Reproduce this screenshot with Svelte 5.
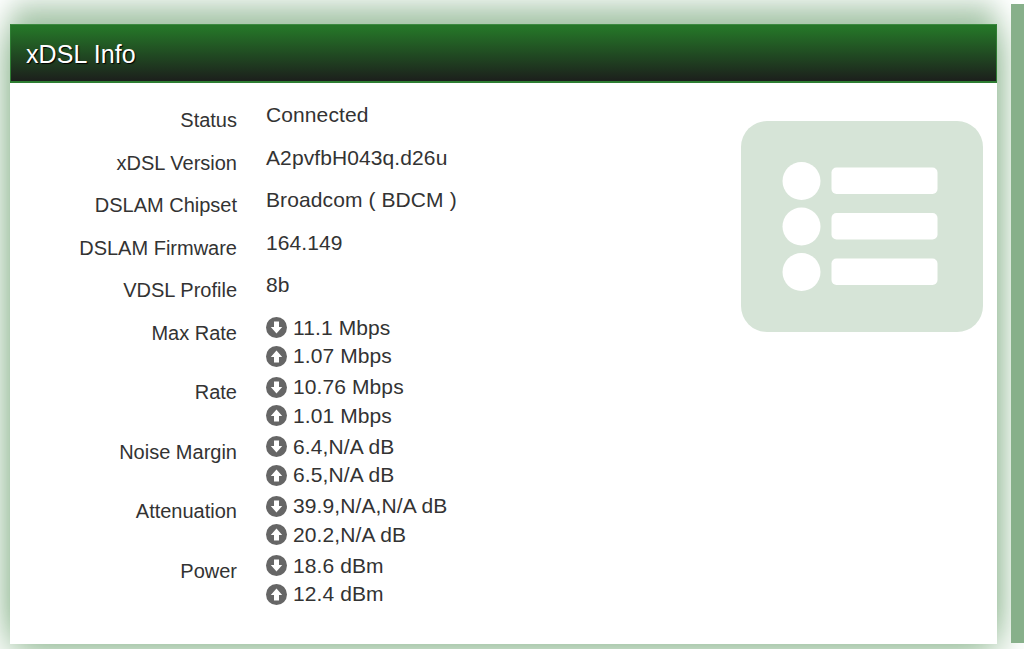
<script>
  const info = [
    { label: "Status", value: "Connected" },
    { label: "xDSL Version", value: "A2pvfbH043q.d26u" },
    { label: "DSLAM Chipset", value: "Broadcom ( BDCM )" },
    { label: "DSLAM Firmware", value: "164.149" },
    { label: "VDSL Profile", value: "8b" }
  ];
  const rates = [
    { label: "Max Rate", down: "11.1 Mbps", up: "1.07 Mbps" },
    { label: "Rate", down: "10.76 Mbps", up: "1.01 Mbps" },
    { label: "Noise Margin", down: "6.4,N/A dB", up: "6.5,N/A dB" },
    { label: "Attenuation", down: "39.9,N/A,N/A dB", up: "20.2,N/A dB" },
    { label: "Power", down: "18.6 dBm", up: "12.4 dBm" }
  ];
</script>

{#snippet arrow(dir)}
  <svg class="arrow" viewBox="0 0 21 21" class:up={dir === "up"}>
    <circle cx="10.5" cy="10.5" r="10.5" fill="#666" />
    <path d="M8 4.5h5v5.5h3.2l-5.7 6.5-5.7-6.5H8z" fill="#fff" />
  </svg>
{/snippet}

<div class="page">
  <main class="card">
    <header class="title">xDSL Info</header>
    <div class="body">
      <div class="rows">
        {#each info as row}
          <div class="row">
            <div class="label">{row.label}</div>
            <div class="value">{row.value}</div>
          </div>
        {/each}
        {#each rates as row}
          <div class="row rate">
            <div class="label">{row.label}</div>
            <div class="value">
              <div class="line">{@render arrow("down")}{row.down}</div>
              <div class="line">{@render arrow("up")}{row.up}</div>
            </div>
          </div>
        {/each}
      </div>
      <svg class="badge" viewBox="0 0 242 211">
        <rect width="242" height="211" rx="26" fill="#d6e4d7" />
        <circle cx="60.500" cy="60" r="19" fill="#fff" />
        <circle cx="60.500" cy="105.500" r="19" fill="#fff" />
        <circle cx="60.500" cy="151" r="19" fill="#fff" />
        <rect x="90.500" y="46.500" width="106" height="26.500" rx="5" fill="#fff" />
        <rect x="90.500" y="92" width="106" height="26.500" rx="5" fill="#fff" />
        <rect x="90.500" y="137.500" width="106" height="26.500" rx="5" fill="#fff" />
      </svg>
    </div>
  </main>
  <div class="strip"></div>
</div>

<style>
  :global(body) {
    margin: 0;
    background: #fff;
    overflow: hidden;
  }
  .page {
    display: flex;
    align-items: flex-start;
    height: 649px;
    box-sizing: border-box;
    padding: 24px 0 0 10px;
    overflow: hidden;
    font-family: "Liberation Sans", Arial, sans-serif;
    color: #333;
  }
  .card {
    flex: none;
    width: 987px;
    height: 620px;
    background: #fff;
    box-shadow: 0 6px 36px #7fae82, 0 -24px 24px -2px #c4d8c6;
  }
  .title {
    box-sizing: border-box;
    height: 59px;
    padding: 14px 15px 0;
    border: 1px solid #2e7d32;
    border-top-color: #3c8a40;
    border-bottom-width: 2px;
    font-size: 25px;
    line-height: 30px;
    letter-spacing: 0.1px;
    color: #fff;
    text-shadow: 1px 1px 1px #000;
    background: linear-gradient(#257528 5%, #1c1f1c 100%);
  }
  .body {
    display: flex;
    justify-content: space-between;
    align-items: flex-start;
    padding: 23px 14px 0 0;
  }
  .rows {
    display: flex;
    flex-direction: column;
  }
  .row {
    display: flex;
    gap: 29px;
    height: 42.500px;
  }
  .rate {
    height: 59.500px;
  }
  .label {
    width: 227px;
    text-align: right;
    font-size: 20px;
    line-height: 24px;
    margin-top: 2px;
  }
  .value {
    font-size: 21px;
    line-height: 26px;
    letter-spacing: 0.1px;
    margin-top: -4px;
  }
  .rate .value {
    margin-top: -5px;
  }
  .line {
    display: flex;
    align-items: center;
    gap: 6px;
    height: 28.500px;
  }
  .arrow {
    width: 21px;
    height: 21px;
    flex: none;
  }
  .arrow.up {
    transform: rotate(180deg);
  }
  .badge {
    width: 242px;
    height: 211px;
    flex: none;
    margin-top: 14.500px;
  }
  .strip {
    flex: none;
    width: 13px;
    height: 639px;
    margin: -20px 0 0 14px;
    background: #87b08a;
  }
</style>
